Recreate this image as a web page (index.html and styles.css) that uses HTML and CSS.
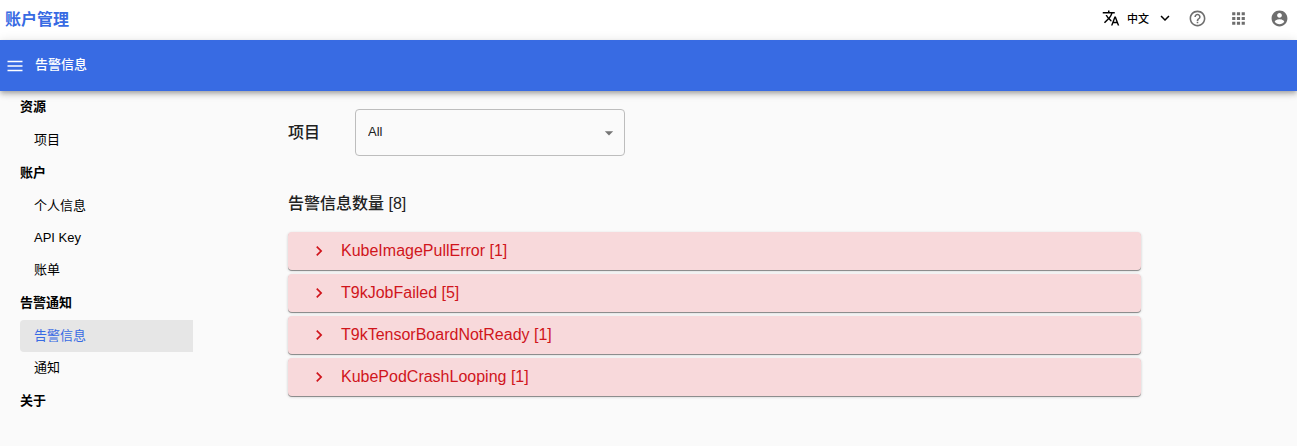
FILE: index.html
```html
<!DOCTYPE html>
<html lang="zh-CN">
<head>
<meta charset="utf-8">
<meta name="viewport" content="width=device-width, initial-scale=1">
<title>账户管理</title>
<link rel="stylesheet" href="styles.css">
</head>
<body>
<header class="topbar">
  <a class="brand" href="#">账户管理</a>
  <div class="tools">
    <button class="lang" type="button">
      <svg class="icon icon-lang" viewBox="0 0 24 24"><path d="M12.87 15.07l-2.54-2.51.03-.03c1.74-1.94 2.98-4.17 3.71-6.53H17V4h-7V2H8v2H1v1.99h11.17C11.5 7.92 10.44 9.75 9 11.35 8.07 10.32 7.3 9.19 6.69 8h-2c.73 1.63 1.73 3.17 2.98 4.56l-5.09 5.02L4 19l5-5 3.11 3.11.76-2.04zM18.5 10h-2L12 22h2l1.12-3h4.75L21 22h2l-4.5-12zm-2.62 7l1.62-4.33L19.12 17h-3.24z"/></svg>
      <span>中文</span>
      <svg class="icon icon-down" viewBox="0 0 24 24"><path d="M16.59 8.59L12 13.17 7.41 8.59 6 10l6 6 6-6z"/></svg>
    </button>
    <button class="tool" type="button" aria-label="帮助">
      <svg class="icon icon-tool" viewBox="0 0 24 24"><path d="M11 18h2v-2h-2v2zm1-16C6.48 2 2 6.48 2 12s4.48 10 10 10 10-4.48 10-10S17.52 2 12 2zm0 18c-4.41 0-8-3.59-8-8s3.59-8 8-8 8 3.59 8 8-3.59 8-8 8zm0-14c-2.21 0-4 1.79-4 4h2c0-1.1.9-2 2-2s2 .9 2 2c0 2-3 1.75-3 5h2c0-2.25 3-2.5 3-5 0-2.21-1.79-4-4-4z"/></svg>
    </button>
    <button class="tool" type="button" aria-label="应用">
      <svg class="icon icon-tool" viewBox="0 0 24 24"><path d="M4 8h4V4H4v4zm6 12h4v-4h-4v4zm-6 0h4v-4H4v4zm0-6h4v-4H4v4zm6 0h4v-4h-4v4zm6-10v4h4V4h-4zm-6 4h4V4h-4v4zm6 6h4v-4h-4v4zm0 6h4v-4h-4v4z"/></svg>
    </button>
    <button class="tool" type="button" aria-label="用户">
      <svg class="icon icon-tool" viewBox="0 0 24 24"><path d="M12 2C6.48 2 2 6.48 2 12s4.48 10 10 10 10-4.48 10-10S17.52 2 12 2zm0 3c1.66 0 3 1.34 3 3s-1.34 3-3 3-3-1.34-3-3 1.34-3 3-3zm0 14.2c-2.5 0-4.71-1.28-6-3.22.03-1.99 4-3.08 6-3.08 1.99 0 5.97 1.09 6 3.08-1.29 1.94-3.5 3.22-6 3.22z"/></svg>
    </button>
  </div>
</header>
<div class="appbar">
  <button class="menu" type="button" aria-label="菜单">
    <svg class="icon icon-menu" viewBox="0 0 16 12"><path d="M0.500 1.500h15M0.500 6h15M0.500 10.500h15"/></svg>
  </button>
  <h1 class="page-title">告警信息</h1>
</div>
<div class="layout">
  <nav class="sidebar">
    <section class="group">
      <h2 class="group-title">资源</h2>
      <a class="item" href="#">项目</a>
    </section>
    <section class="group">
      <h2 class="group-title">账户</h2>
      <a class="item" href="#">个人信息</a>
      <a class="item" href="#">API Key</a>
      <a class="item" href="#">账单</a>
    </section>
    <section class="group">
      <h2 class="group-title">告警通知</h2>
      <a class="item item-active" href="#" aria-current="page">告警信息</a>
      <a class="item" href="#">通知</a>
    </section>
    <section class="group">
      <h2 class="group-title">关于</h2>
    </section>
  </nav>
  <main class="content">
    <div class="filter">
      <label class="filter-label" for="project">项目</label>
      <div class="select-box">
        <select class="select" id="project"><option>All</option></select>
        <svg class="icon icon-arrow" viewBox="0 0 24 24"><path d="M7 10l5 5 5-5z"/></svg>
      </div>
    </div>
    <h2 class="count">告警信息数量 [8]</h2>
    <div class="alerts">
      <button class="alert" type="button"><svg class="icon icon-right" viewBox="0 0 24 24"><path d="M10 6L8.590 7.410 13.170 12l-4.580 4.590L10 18l6-6z"/></svg><span>KubeImagePullError [1]</span></button>
      <button class="alert" type="button"><svg class="icon icon-right" viewBox="0 0 24 24"><path d="M10 6L8.590 7.410 13.170 12l-4.580 4.590L10 18l6-6z"/></svg><span>T9kJobFailed [5]</span></button>
      <button class="alert" type="button"><svg class="icon icon-right" viewBox="0 0 24 24"><path d="M10 6L8.590 7.410 13.170 12l-4.580 4.590L10 18l6-6z"/></svg><span>T9kTensorBoardNotReady [1]</span></button>
      <button class="alert" type="button"><svg class="icon icon-right" viewBox="0 0 24 24"><path d="M10 6L8.590 7.410 13.170 12l-4.580 4.590L10 18l6-6z"/></svg><span>KubePodCrashLooping [1]</span></button>
    </div>
  </main>
</div>
</body>
</html>
```

FILE: styles.css
```css
* {
  box-sizing: border-box;
}

body {
  margin: 0;
  background: #fafafa;
  color: #000;
  font-family: "Liberation Sans", "Noto Sans CJK SC", sans-serif;
  font-size: 13px;
}

button {
  border: 0;
  padding: 0;
  background: none;
  color: inherit;
  font: inherit;
  cursor: pointer;
}

a {
  color: inherit;
  text-decoration: none;
}

h1,
h2 {
  margin: 0;
}

.icon {
  display: block;
  flex: none;
  fill: currentColor;
}

.topbar {
  display: flex;
  align-items: center;
  justify-content: space-between;
  height: 40px;
  padding: 0 8px 4px 5px;
  background: #fff;
}

.brand {
  color: #386be3;
  font-size: 16px;
  font-weight: 700;
}

.tools {
  display: flex;
  align-items: center;
  gap: 22px;
}

.lang {
  display: flex;
  align-items: center;
  gap: 7px;
  margin-right: -8px;
  font-size: 11px;
  font-weight: 500;
}

.icon-lang {
  width: 18px;
  height: 18px;
}

.icon-down {
  width: 18px;
  height: 18px;
}

.icon-tool {
  width: 19px;
  height: 19px;
  fill: #6e6e6e;
}

.appbar {
  position: relative;
  display: flex;
  align-items: center;
  gap: 12px;
  height: 51px;
  padding: 0 7px;
  background: #386be3;
  color: #fff;
  box-shadow: 0 2px 4px -1px rgba(0, 0, 0, 0.2), 0 4px 5px rgba(0, 0, 0, 0.14), 0 1px 10px rgba(0, 0, 0, 0.12);
}

.icon-menu {
  width: 16px;
  height: 12px;
  stroke: currentColor;
  stroke-width: 1.500;
}

.page-title {
  padding-bottom: 4px;
  font-size: 13px;
  font-weight: 500;
}

.layout {
  display: flex;
}

.sidebar {
  display: flex;
  flex: none;
  flex-direction: column;
  gap: 2px;
  width: 193px;
  padding: 1px 0 0 20px;
}

.group-title {
  margin-bottom: 2px;
  font-size: 13px;
  font-weight: 700;
  line-height: 30px;
}

.item {
  display: block;
  padding-left: 14px;
  border-radius: 4px 0 0 4px;
  line-height: 32px;
}

.item-active {
  background: #e6e6e6;
  color: #386be3;
}

.content {
  flex: 1;
  padding: 18px 156px 24px 95px;
  color: #212121;
}

.filter {
  display: flex;
  align-items: center;
  gap: 35px;
}

.filter-label {
  padding-bottom: 4px;
  font-size: 16px;
  font-weight: 500;
}

.select-box {
  position: relative;
  width: 270px;
}

.select {
  width: 100%;
  height: 47px;
  padding: 0 32px 2px 12px;
  border: 1px solid #bdbdbd;
  border-radius: 4px;
  appearance: none;
  background: transparent;
  color: #212121;
  font: inherit;
}

.icon-arrow {
  position: absolute;
  top: 14px;
  right: 6px;
  width: 20px;
  height: 20px;
  fill: #757575;
  pointer-events: none;
}

.count {
  margin: 36px 0 16px;
  font-size: 16px;
  font-weight: 500;
  line-height: 24px;
}

.alerts {
  display: flex;
  flex-direction: column;
  gap: 4px;
}

.alert {
  display: flex;
  align-items: center;
  gap: 12px;
  height: 38px;
  padding: 0 21px;
  border-radius: 4px;
  background: #f8d9db;
  box-shadow: 0 1px 0 rgba(0, 0, 0, 0.35), 0 1px 3px rgba(0, 0, 0, 0.2);
  color: #d0151c;
  font-size: 16px;
  text-align: left;
}

.icon-right {
  width: 20px;
  height: 20px;
}
```
